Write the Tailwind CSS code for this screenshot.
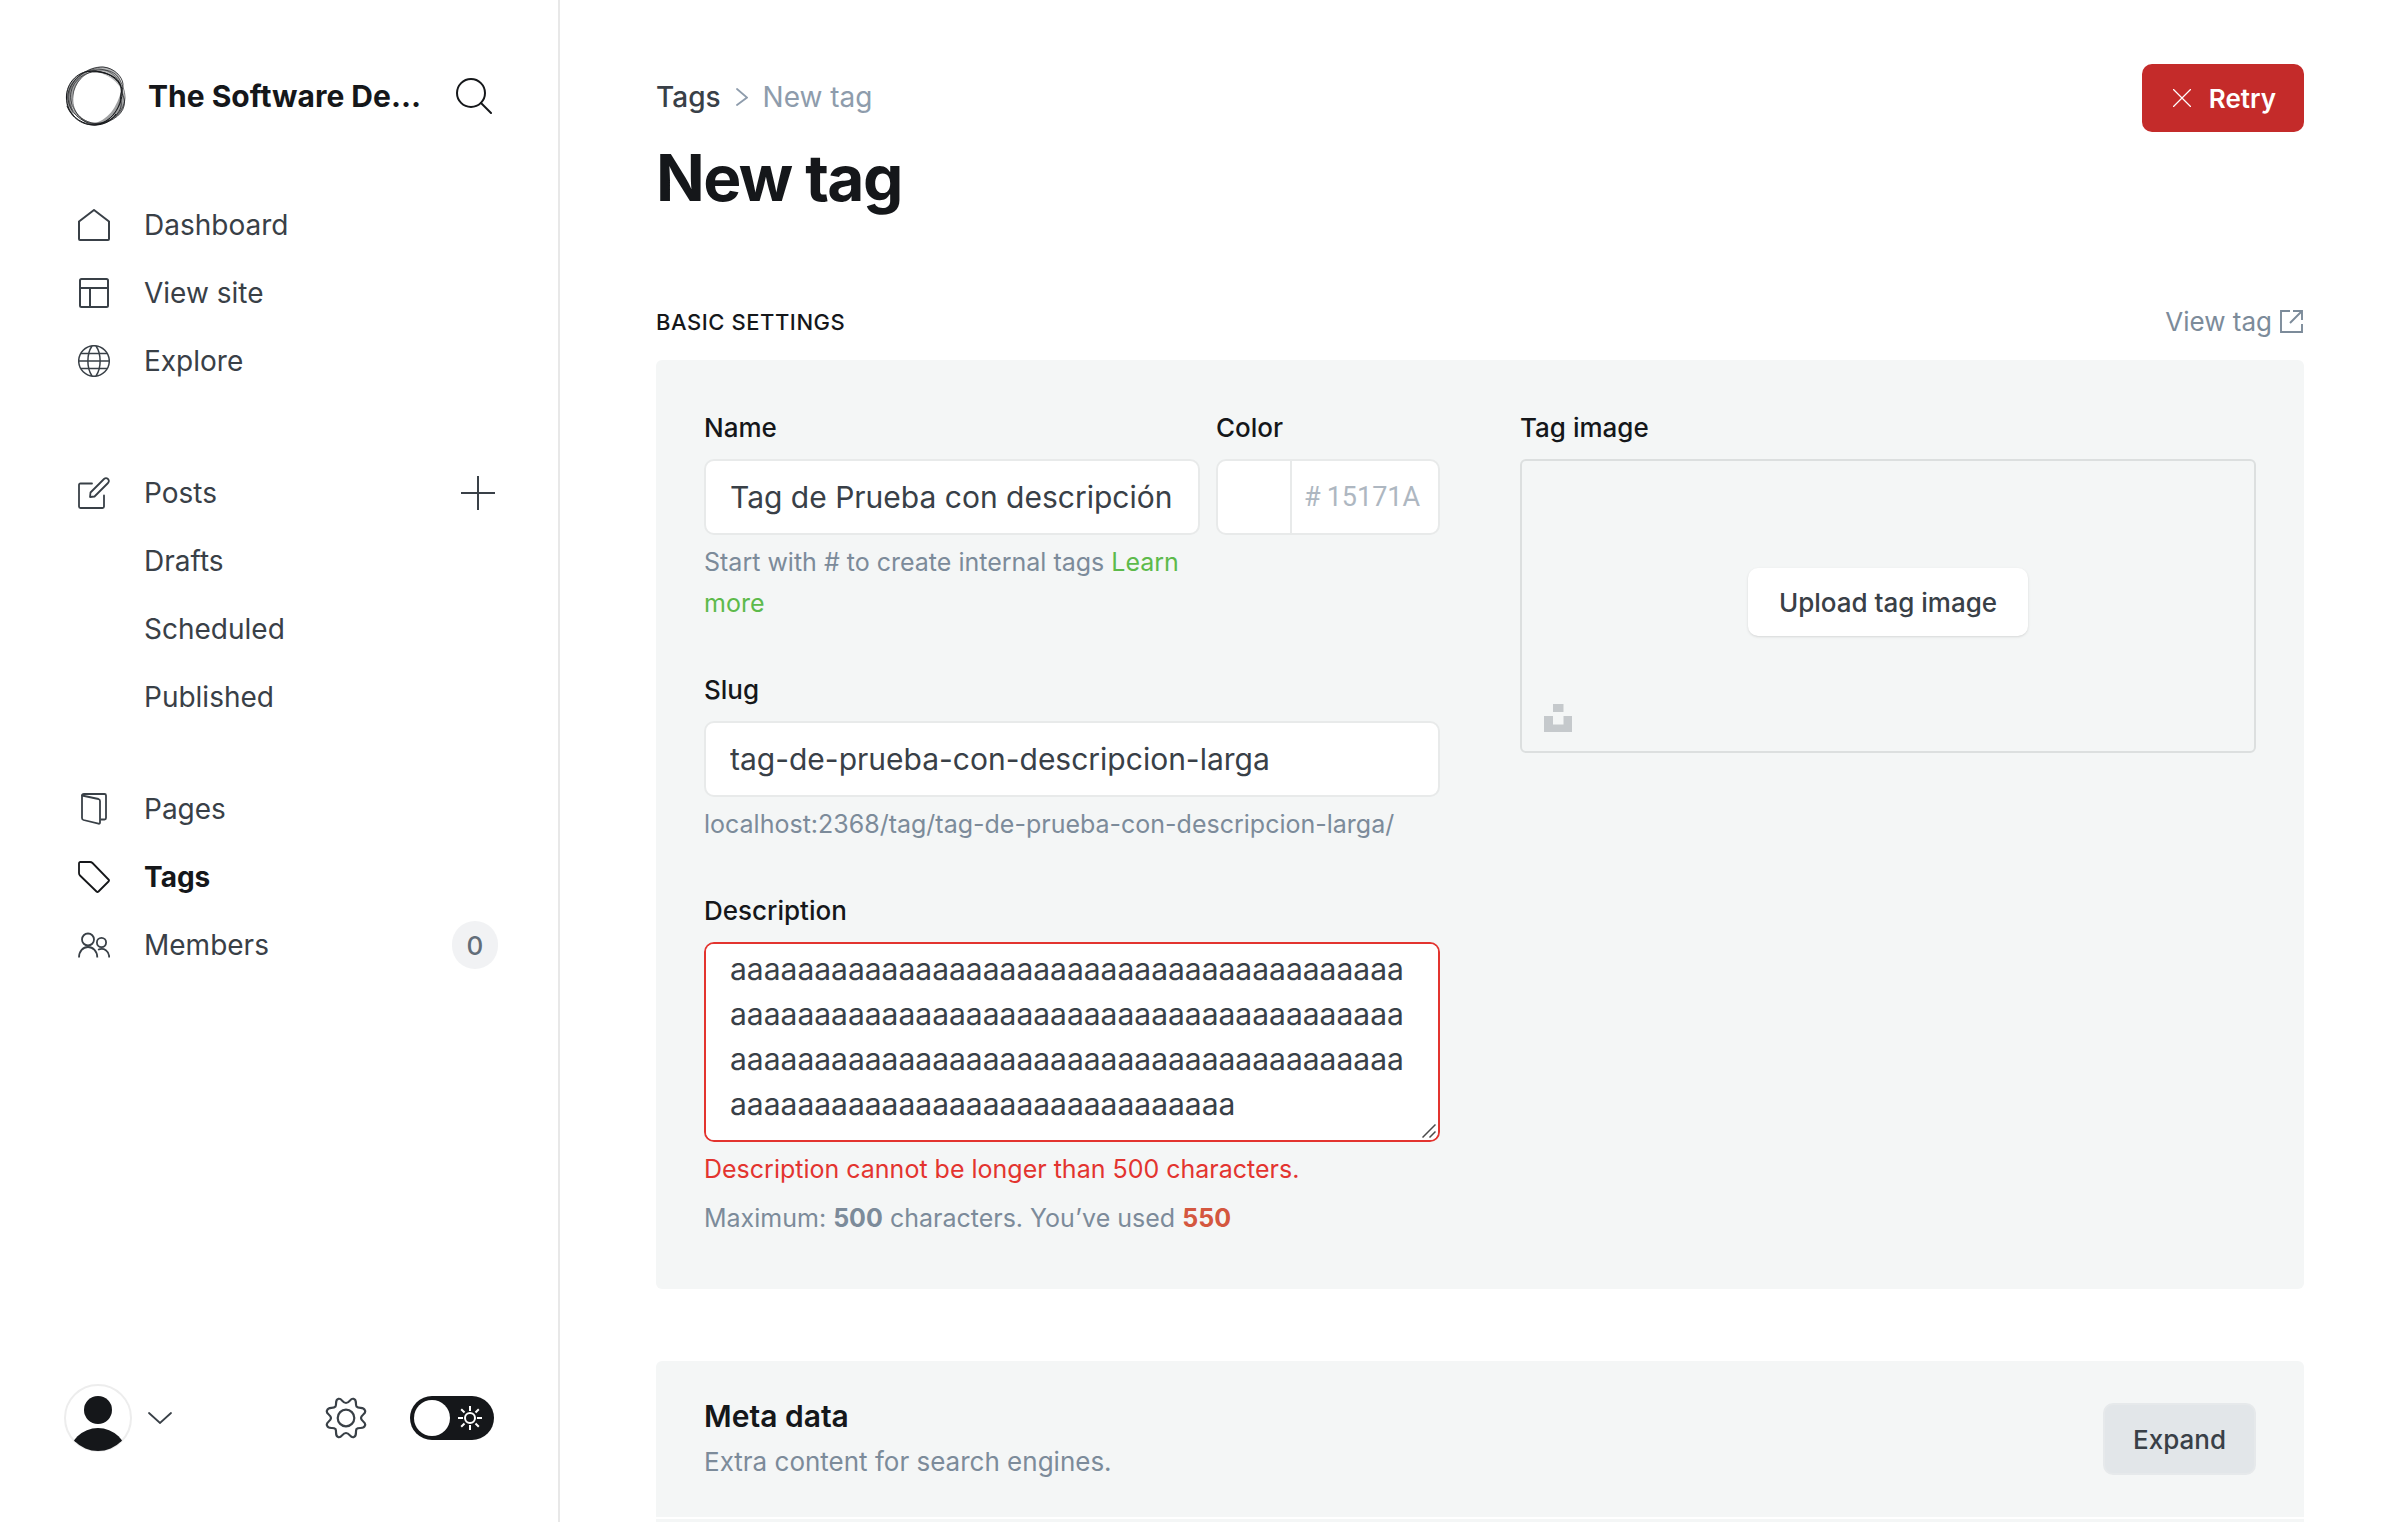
<!DOCTYPE html>
<html lang="en">
<head>
<meta charset="utf-8">
<meta name="viewport" content="width=device-width, initial-scale=1">
<title>New tag</title>
<script src="https://cdn.jsdelivr.net/npm/@tailwindcss/browser@4"></script>
</head>
<body class="flex h-screen overflow-hidden bg-white font-[Inter,'Liberation_Sans',sans-serif] text-[26px] text-[#394047]">

<!-- Sidebar -->
<aside class="flex w-[560px] shrink-0 flex-col border-r-2 border-[#e8e8e8] pt-16 pr-16 pb-[70px] pl-16">
  <header class="flex h-16 items-center">
    <svg class="size-16 shrink-0" viewBox="0 0 64 64" fill="none" aria-hidden="true">
      <g fill="#15171a" fill-rule="evenodd">
        <path fill-opacity=".3" d="M24 6C30 2 42 .5 49 6C56 11 58 16 58 26C50 13 40 9 24 6Z"/>
        <path fill-opacity=".4" d="M58 24C62 34 62 44 55 51C46 58 38 61 27 60C44 57 53 44 58 24Z"/>
        <path fill-opacity=".4" d="M26 6C12 9 1 21 2 36C2 44 6 50 11 54C4 36 10 18 26 6Z"/>
      </g>
      <g stroke="#15171a" stroke-width="1">
        <path d="M2.500 34C2 18 15 6 30 7C46 9 57 14 58 27C59 41 47 60 30 61C14 61 3 49 2.500 34Z"/>
        <path stroke-opacity=".8" d="M4 30C7 14 24 3 39 3C50 4 58 12 59 20C59 28 55 30 57 38C59 48 46 59 34 60C17 61 2 45 4 30Z"/>
        <path stroke-opacity=".7" d="M7 28C9 16 22 7 32 8C44 8 55 14 57 24C58 33 62 34 60 42C58 52 44 60 31 61C17 60 4 42 7 28Z"/>
        <path stroke-opacity=".6" d="M9 32C10 18 20 10 29 7C40 4 50 7 54 13C58 19 61 27 61 34C60 50 44 61 28 59C16 56 7 46 9 32Z"/>
        <path stroke-opacity=".5" d="M5 36C3 20 18 5 35 5C48 6 58 16 57 28C57 42 50 54 38 59C23 62 7 50 5 36Z"/>
        <path d="M3 42C8 54 20 61 31 61C40 61 47 57 52 50M22 8C36 5 50 10 57 22"/>
      </g>
    </svg>
    <span class="ml-5 text-[30px] leading-10 font-bold whitespace-nowrap text-[#15171a]">The Software De…</span>
    <button type="button" aria-label="Search" class="mr-[2px] ml-auto">
      <svg class="size-9" viewBox="0 0 36 36" fill="none" stroke="#15171a" stroke-width="2" stroke-linecap="round"><circle cx="15" cy="15" r="14"/><path d="M25 25L35 35"/></svg>
    </button>
  </header>

  <nav class="mt-[63px] flex flex-col text-[28px]">
    <ul>
      <li><a href="#" class="flex h-[68px] items-center gap-[34px] pl-[14px]">
        <svg class="size-8" viewBox="0 0 32 32" fill="none" stroke="currentColor" stroke-width="2" stroke-linejoin="round"><path d="M1 12.500L16 1L31 12.500V30Q31 31 30 31H2Q1 31 1 30Z"/></svg>Dashboard</a></li>
      <li><a href="#" class="flex h-[68px] items-center gap-[34px] pl-[14px]">
        <svg class="size-8" viewBox="0 0 32 32" fill="none" stroke="currentColor" stroke-width="2"><rect x="2" y="2" width="28" height="28" rx="1.500"/><path d="M2 11H30M12 11V30"/></svg>View site</a></li>
      <li><a href="#" class="flex h-[68px] items-center gap-[34px] pl-[14px]">
        <svg class="size-8" viewBox="0 0 32 32" fill="none" stroke="currentColor" stroke-width="1.500"><circle cx="16" cy="16" r="15.300"/><path d="M3 8.500H29M1 16H31M3 23.500H29"/><path d="M14 1C8.500 9 8.500 23 14 31M18 1C23.500 9 23.500 23 18 31"/></svg>Explore</a></li>
    </ul>
    <ul class="mt-16">
      <li class="flex items-center justify-between"><a href="#" class="flex h-[68px] items-center gap-[34px] pl-[14px]">
        <svg class="size-8" viewBox="0 0 32 32" fill="none" stroke="currentColor" stroke-width="1.800" stroke-linecap="round" stroke-linejoin="round"><path d="M14 6.500H2.500Q1 6.500 1 8V29.500Q1 31 2.500 31H24.500Q26 31 26 29.500V18.500"/><path d="M12 20L12.500 15.500L26 2Q28 .3 30 2Q31.700 4 30 6L16.500 19.500Z"/></svg>Posts</a>
        <button type="button" aria-label="New post" class="-mr-px"><svg class="size-[34px]" viewBox="0 0 34 34" stroke="currentColor" stroke-width="2"><path d="M17 0V34M0 17H34"/></svg></button></li>
      <li><a href="#" class="flex h-[68px] items-center pl-20">Drafts</a></li>
      <li><a href="#" class="flex h-[68px] items-center pl-20">Scheduled</a></li>
      <li><a href="#" class="flex h-[68px] items-center pl-20">Published</a></li>
    </ul>
    <ul class="mt-11">
      <li><a href="#" class="flex h-[68px] items-center gap-[34px] pl-[14px]">
        <svg class="size-8" viewBox="0 0 32 32" fill="none" stroke="currentColor" stroke-width="1.800" stroke-linejoin="round"><path d="M4 3Q4 1 6 1H26.500Q28 1 28 2.500V25Q28 26.500 26.500 26.500H22.500"/><path d="M4 2.500L20.500 6Q22 6.400 22 8V29.500Q22 31 20.500 30.700L5.500 27Q4 26.500 4 25Z"/></svg>Pages</a></li>
      <li><a href="#" aria-current="page" class="flex h-[68px] items-center gap-[34px] pl-[14px] font-bold text-[#15171a]">
        <svg class="size-8" viewBox="0 0 32 32" fill="none" stroke="currentColor" stroke-width="1.800" stroke-linejoin="round"><path d="M2.500 1H12Q13.500 1 14.500 2L30.500 18.500Q31.500 19.500 30.500 20.500L20.500 30.500Q19.500 31.500 18.500 30.500L2 14.500Q1 13.500 1 12V2.500Q1 1 2.500 1Z"/></svg>Tags</a></li>
      <li class="flex items-center justify-between"><a href="#" class="flex h-[68px] items-center gap-[34px] pl-[14px]">
        <svg class="size-8" viewBox="0 0 32 32" fill="none" stroke="currentColor" stroke-width="1.800"><circle cx="10" cy="10.500" r="6"/><circle cx="23.500" cy="13.500" r="4.600"/><path d="M1 28.500C1 22 5 18 10 18S19.300 22 19.300 28.500M20 20.800C26 18 31.200 22 31.200 28.500"/></svg>Members</a>
        <span class="-mr-1 flex h-12 w-[46px] items-center justify-center rounded-full bg-[#f1f2f4] text-[26px] font-medium text-[#626d79]">0</span></li>
    </ul>
  </nav>

  <footer class="mt-auto flex items-center">
    <button type="button" aria-label="Account menu" class="flex items-center gap-4">
      <svg class="size-[68px]" viewBox="0 0 68 68"><defs><clipPath id="disc"><circle cx="34" cy="34" r="33"/></clipPath></defs><circle cx="34" cy="34" r="33" fill="#fff" stroke="#ededed" stroke-width="2"/><g fill="#15171a" clip-path="url(#disc)"><circle cx="34" cy="26" r="14"/><ellipse cx="34" cy="72" rx="29" ry="28"/></g></svg>
      <svg class="h-3 w-6" viewBox="0 0 24 12" fill="none" stroke="currentColor" stroke-width="1.800" stroke-linecap="round"><path d="M1 1L12 11L23 1"/></svg>
    </button>
    <a href="#" aria-label="Settings" class="ml-auto">
      <svg class="size-[42px]" viewBox="0 0 42 42" fill="none" stroke="currentColor" stroke-width="2.200" stroke-linejoin="round"><circle cx="21" cy="21" r="8.300"/><path d="M21 6C25 6 25 1 28.500 1.800C32.500 3 30 7 31.500 9.500C34 12.500 38.500 9 40 13.500C41.500 17 36 17.500 36 21S41.500 25 40 28.500C38.500 33 34 29.500 31.500 32C30 35 32.500 39 28.500 40.200C25 41 25 36 21 36S17 41 13.500 40.200C9.500 39 12 35 10.500 32C8 29.500 3.500 33 2 28.500C.5 25 6 24.500 6 21S.5 17 2 13.500C3.500 9 8 12.500 10.500 9.500C12 7 9.500 3 13.500 1.800C17 1 17 6 21 6Z"/></svg>
    </a>
    <button type="button" role="switch" aria-checked="false" aria-label="Night shift" class="ml-[43px] flex h-11 w-[84px] items-center justify-between rounded-full bg-[#15171a] pr-3 pl-1">
      <span class="size-9 rounded-full bg-white"></span>
      <svg class="size-6" viewBox="0 0 24 24" fill="none" stroke="#fff" stroke-width="2"><circle cx="12" cy="12" r="5"/><path d="M12 0V5M12 19V24M0 12H5M19 12H24M3.200 3.200L6.500 6.500M17.500 17.500L20.800 20.800M3.200 20.800L6.500 17.500M17.500 6.500L20.800 3.200"/></svg>
    </button>
  </footer>
</aside>

<!-- Tag editor -->
<main class="min-w-0 flex-1 overflow-y-auto px-24 pt-16 [scrollbar-width:none]">
  <header class="flex items-start justify-between">
    <div class="pt-[13px]">
      <nav aria-label="Breadcrumb" class="flex items-center text-[28px] leading-10">
        <a href="#" class="font-medium">Tags</a>
        <svg class="mx-[15px] h-[18px] w-3" viewBox="0 0 12 18" fill="none" stroke="#8e9cac" stroke-width="1.800" stroke-linecap="round"><path d="M1 1L11 9.500L1 17"/></svg>
        <span class="text-[#8e9cac]">New tag</span>
      </nav>
      <h1 class="mt-[25px] text-[64px] leading-[72px] font-bold tracking-tight text-[#15171a]">New tag</h1>
    </div>
    <button type="button" class="flex h-[68px] items-center gap-[18px] rounded-[10px] bg-[#c42b2a] pr-7 pl-[31px] font-semibold text-white">
      <svg class="size-[18px]" viewBox="0 0 18 18" stroke="currentColor" stroke-width="1.200" stroke-linecap="round"><path d="M.5 .5L17.500 17.500M17.500 .5L.5 17.500"/></svg>Retry</button>
  </header>

  <div class="mt-[88px] mb-[18px] flex items-center justify-between">
    <h2 class="text-[22px] leading-10 font-medium tracking-wide text-[#15171a]">BASIC SETTINGS</h2>
    <a href="#" class="flex items-center gap-2 leading-10 text-[#7c8b9a]">View tag
      <svg class="size-6" viewBox="0 0 24 24" fill="none" stroke="currentColor" stroke-width="1.900"><path d="M10 1H1V22H22V14M13 1H22V10M21.500 1.500L10 13"/></svg></a>
  </div>

  <section class="grid grid-cols-2 gap-20 rounded-md bg-[#f4f6f6] px-12 pt-12 pb-[50px]">
    <div>
      <div class="flex gap-4">
        <div class="min-w-0 flex-1">
          <label for="tag-name" class="mb-[11px] block leading-10 font-medium text-[#15171a]">Name</label>
          <input id="tag-name" type="text" value="Tag de Prueba con descripción" class="block h-[76px] w-full rounded-[10px] border-2 border-[#e8eaea] bg-white px-6 text-[30px] outline-none">
          <p class="mt-[7px] text-[25px] leading-[41px] text-[#7c8b9a]">Start with # to create internal tags <a href="#" class="text-[#5dba4b]">Learn more</a></p>
        </div>
        <div class="w-[224px]">
          <label for="tag-color" class="mb-[11px] block leading-10 font-medium text-[#15171a]">Color</label>
          <div class="flex h-[76px] items-center rounded-[10px] border-2 border-[#e8eaea] bg-white font-[Roboto,sans-serif] text-[27px] text-[#aeb7c1]">
            <button type="button" aria-label="Choose color" class="h-full w-[74px] shrink-0 border-r-2 border-[#e8eaea]"></button>
            <span class="ml-3">#</span>
            <input id="tag-color" type="text" placeholder="15171A" class="ml-[6px] w-full min-w-0 bg-transparent outline-none placeholder:text-[#aeb7c1]">
          </div>
        </div>
      </div>

      <div class="mt-[46px]">
        <label for="tag-slug" class="mb-[11px] block leading-10 font-medium text-[#15171a]">Slug</label>
        <input id="tag-slug" type="text" value="tag-de-prueba-con-descripcion-larga" class="block h-[76px] w-full rounded-[10px] border-2 border-[#e8eaea] bg-white px-6 text-[30px] outline-none">
        <p class="mt-[7px] text-[25px] leading-[41px] text-[#7c8b9a]">localhost:2368/tag/tag-de-prueba-con-descripcion-larga/</p>
      </div>

      <div class="mt-[46px]">
        <label for="tag-description" class="mb-[11px] block leading-10 font-medium text-[#15171a]">Description</label>
        <div class="relative">
          <textarea id="tag-description" aria-invalid="true" class="block h-[200px] w-full resize-none rounded-[10px] border-2 border-[#e3342f] bg-white px-6 py-[13px] text-[30px] leading-[45px] outline-none [scrollbar-width:none]"></textarea>
          <svg class="pointer-events-none absolute right-1 bottom-1 size-[14px]" viewBox="0 0 14 14" stroke="#4a4a4a" stroke-width="1.500" aria-hidden="true"><path d="M.5 13.500L13.500 .5M7.500 13.500L13.500 7.500"/></svg>
        </div>
        <p class="mt-[7px] text-[25px] leading-[41px] text-[#e3342f]">Description cannot be longer than 500 characters.</p>
        <p class="mt-2 text-[25px] leading-[41px] text-[#7c8b9a]">Maximum: <b>500</b> characters. You’ve used <b class="text-[#d4573f]">550</b></p>
      </div>
    </div>

    <div>
      <h3 class="mb-[11px] leading-10 font-medium text-[#15171a]">Tag image</h3>
      <div class="relative flex h-[294px] items-center justify-center rounded-md border-2 border-[#dcdfdf] pb-2">
        <button type="button" class="h-[68px] w-[280px] rounded-[10px] bg-white font-medium shadow-sm">Upload tag image</button>
        <button type="button" aria-label="Search Unsplash" class="absolute bottom-[19px] left-[22px]">
          <svg class="size-7" viewBox="0 0 28 28" fill="#c5c9cc"><path d="M9 0H19.500V8H9ZM0 12H9V20.500H19.500V12H28V28H0Z"/></svg>
        </button>
      </div>
    </div>
  </section>

  <section class="mt-[72px] flex flex-col gap-[2px] overflow-hidden rounded-md">
    <div class="flex h-[156px] items-center justify-between bg-[#f4f6f6] px-12">
      <div class="pb-[2px]">
        <h4 class="text-[30px] leading-11 font-semibold text-[#15171a]">Meta data</h4>
        <p class="mt-1 leading-10 text-[#7c8b9a]">Extra content for search engines.</p>
      </div>
      <button type="button" class="h-[72px] w-[153px] rounded-[10px] border-2 border-[#e6e9eb] bg-[#e2e6e9] font-medium">Expand</button>
    </div>
    <div class="h-[156px] bg-[#f4f6f6]"></div>
  </section>
</main>

<script>
  const description = document.getElementById('tag-description');
  description.value = 'a'.repeat(550);

  // Keep the end of the description in view once fonts and layout have settled
  const showEnd = () => { description.scrollTop = description.scrollHeight; };
  showEnd();
  new ResizeObserver(showEnd).observe(description);
  addEventListener('load', () => requestAnimationFrame(showEnd));
  document.fonts.ready.then(() => setTimeout(showEnd, 30));
</script>
</body>
</html>
